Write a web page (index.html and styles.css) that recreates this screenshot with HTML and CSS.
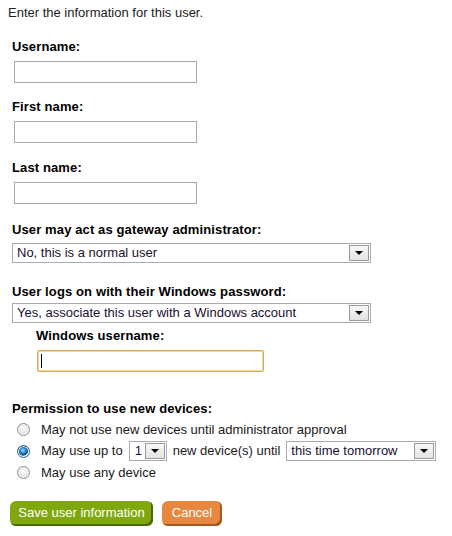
FILE: index.html
```html
<!DOCTYPE html>
<html>
<head>
<meta charset="utf-8">
<link rel="stylesheet" href="styles.css">
</head>
<body>
<p class="intro">Enter the information for this user.</p>
<form class="form">
  <div class="field f-user">
    <label class="lbl">Username:</label>
    <input class="txt" type="text">
  </div>
  <div class="field f-first">
    <label class="lbl">First name:</label>
    <input class="txt" type="text">
  </div>
  <div class="field f-last">
    <label class="lbl">Last name:</label>
    <input class="txt" type="text">
  </div>
  <div class="field f-admin">
    <label class="lbl">User may act as gateway administrator:</label>
    <div class="sel sel-wide"><span class="sel-text">No, this is a normal user</span><span class="sel-btn"><span class="tri"></span></span></div>
  </div>
  <div class="field f-win">
    <label class="lbl">User logs on with their Windows password:</label>
    <div class="sel sel-wide"><span class="sel-text">Yes, associate this user with a Windows account</span><span class="sel-btn"><span class="tri"></span></span></div>
  </div>
  <div class="field f-winuser">
    <label class="lbl">Windows username:</label>
    <div class="txt txt-focus"><span class="caret"></span></div>
  </div>
  <div class="field f-perm">
    <label class="lbl">Permission to use new devices:</label>
    <div class="radios">
      <div class="row"><span class="radio"></span><span>May not use new devices until administrator approval</span></div>
      <div class="row"><span class="radio on"></span><span>May use up to</span><div class="sel sel-num"><span class="sel-text">1</span><span class="sel-btn"><span class="tri"></span></span></div><span>new device(s) until</span><div class="sel sel-until"><span class="sel-text">this time tomorrow</span><span class="sel-btn"><span class="tri"></span></span></div></div>
      <div class="row"><span class="radio"></span><span>May use any device</span></div>
    </div>
  </div>
  <div class="buttons">
    <span class="btn btn-save">Save user information</span>
    <span class="btn btn-cancel">Cancel</span>
  </div>
</form>
</body>
</html>
```
FILE: styles.css
```css
html, body {
  margin: 0;
  padding: 0;
  background: #ffffff;
}
body {
  font-family: "Liberation Sans", Arial, sans-serif;
  font-size: 13px;
  line-height: 16px;
  color: #1a1a1a;
  padding: 5px 8px;
}
.intro {
  margin: 0;
  color: #222;
}
.form {
  display: flex;
  flex-direction: column;
  padding-left: 4px;
}
.field {
  display: flex;
  flex-direction: column;
  align-items: flex-start;
}
.lbl {
  display: block;
  font-weight: bold;
  color: #000;
  line-height: 16px;
  margin-bottom: 6px;
  letter-spacing: 0.12px;
}
.f-user { margin-top: 18px; }
.f-first { margin-top: 16px; }
.f-last { margin-top: 17px; }
.f-admin { margin-top: 18px; }
.f-admin .lbl { margin-bottom: 5px; }
.f-win .lbl { margin-bottom: 3px; }
.f-win { margin-top: 21px; }
.f-winuser { margin-top: 5px; padding-left: 24px; }
.f-perm { margin-top: 29px; }
.f-perm .lbl { margin-bottom: 2px; }

.txt {
  box-sizing: border-box;
  width: 183px;
  height: 22px;
  margin: 0 0 0 2px;
  border: 1px solid #a9a9ad;
  padding: 0;
  background: #fff;
  font: inherit;
}
.txt-focus {
  width: 227px;
  margin-left: 1px;
  border: 1px solid #d9a956;
  box-shadow: inset 0 0 0 1px #f3d6a2;
  border-radius: 2px;
  display: flex;
  align-items: center;
  padding-left: 3px;
}
.caret {
  width: 1px;
  height: 14px;
  background: #000;
}

.sel {
  box-sizing: border-box;
  display: flex;
  align-items: center;
  height: 20px;
  border: 1px solid #a5acb5;
  background: #fff;
  padding: 1px;
}
.sel-wide { width: 359px; }
.sel-text {
  flex: 1;
  padding-left: 3px;
  color: #1a1030;
  white-space: nowrap;
  overflow: hidden;
}
.sel-btn {
  box-sizing: border-box;
  width: 20px;
  height: 16px;
  border: 1px solid #9a9a9a;
  background: linear-gradient(#f7f7f7, #e2e2e2);
  display: flex;
  align-items: center;
  justify-content: center;
}
.tri {
  width: 0;
  height: 0;
  border-left: 4px solid transparent;
  border-right: 4px solid transparent;
  border-top: 4px solid #000;
}

.radios {
  display: flex;
  flex-direction: column;
  align-self: stretch;
}
.row {
  display: flex;
  align-items: center;
  gap: 5px;
  height: 21.5px;
  padding-left: 5px;
}
.row > span:nth-child(2) { margin-left: 6px; }
.radio {
  box-sizing: border-box;
  width: 13px;
  height: 13px;
  border-radius: 50%;
  border: 1px solid #8e8f8f;
  background: radial-gradient(circle at 50% 40%, #ffffff 0%, #e6e6e6 55%, #cfcfcf 100%);
  box-shadow: inset 0 0 0 1px #f4f4f4;
  flex: none;
}
.radio.on {
  border-color: #2c628b;
  background: radial-gradient(circle at 45% 40%, #9fdcff 0%, #2a8cd0 30%, #0b3e6b 55%, #e6eef4 62%, #cfd8df 100%);
}
.sel-num { width: 38px; margin: 0 1px; }
.sel-num .sel-text { padding-left: 4px; }
.sel-until { width: 150px; margin-left: 1px; }

.buttons {
  display: flex;
  gap: 9px;
  margin-top: 17px;
  margin-left: -2px;
}
.btn {
  box-sizing: border-box;
  display: inline-flex;
  align-items: center;
  justify-content: center;
  height: 25px;
  border-radius: 6px;
  color: #fff;
  font-size: 13px;
  padding-bottom: 1px;
}
.btn-save {
  width: 143px;
  background: #7fa80f;
  box-shadow: inset -2px -2px 0 #4b6a0a;
}
.btn-cancel {
  width: 60px;
  background: #e8873f;
  box-shadow: inset -2px -2px 0 #a55a26;
}
```
